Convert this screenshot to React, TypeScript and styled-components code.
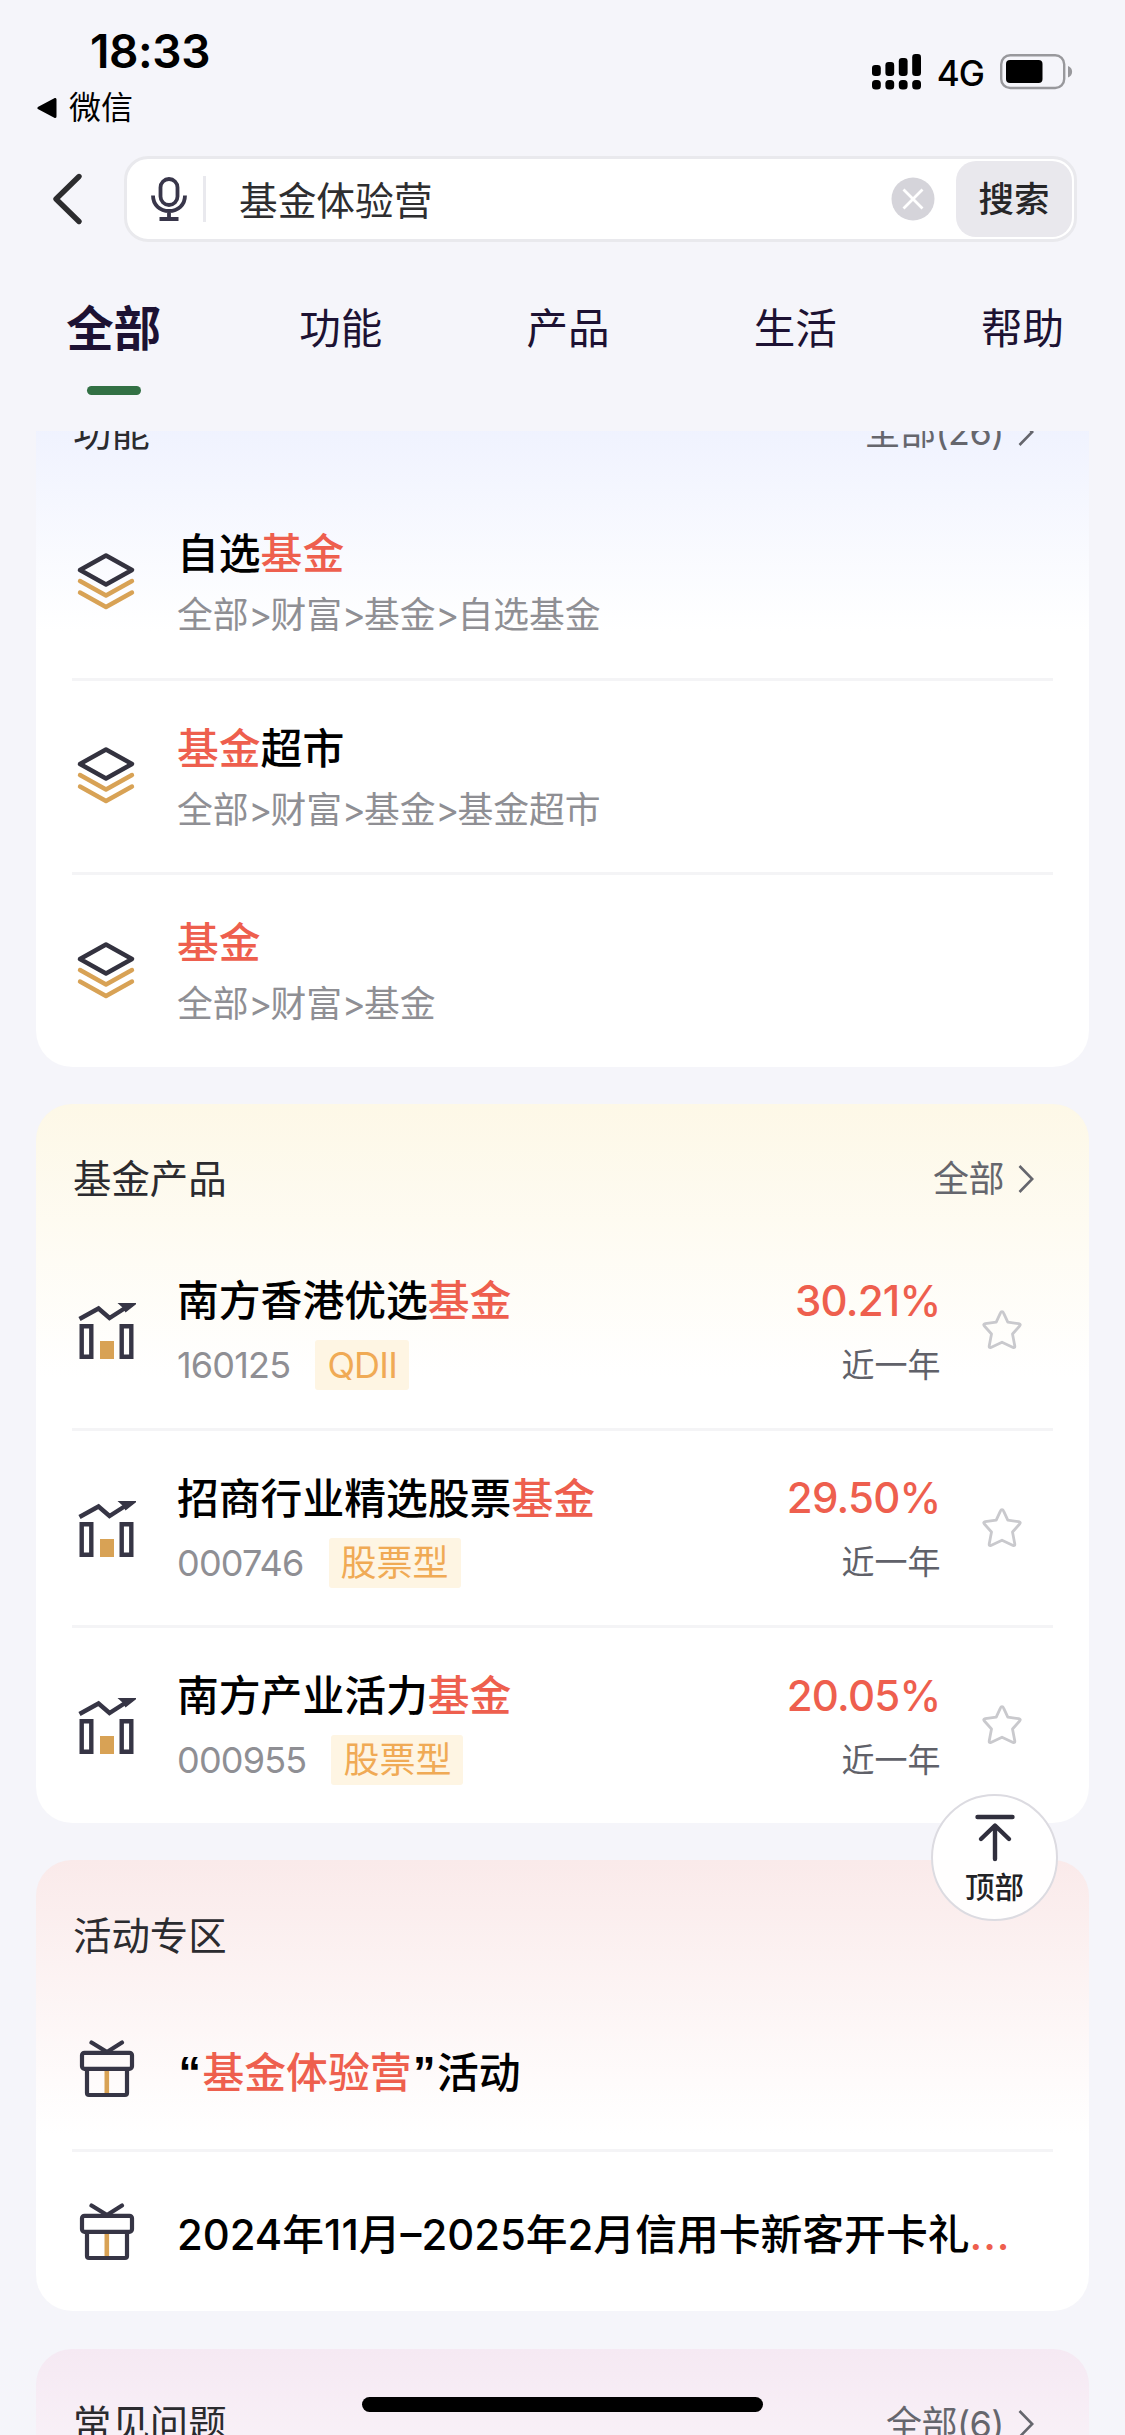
import React from "react";
import styled, { createGlobalStyle } from "styled-components";

const Global = createGlobalStyle`
  * { box-sizing: border-box; }
  html, body { margin: 0; padding: 0; background: #f5f5fa; }
  body { height: 2435px; overflow: hidden; font-family: Inter, "Noto Sans CJK SC", sans-serif; color: #000; }
  svg { display: block; flex: none; }
`;

const Screen = styled.div`
  position: relative;
  width: 1125px;
  height: 2435px;
  overflow: hidden;
  background: #f5f5fa;
  display: flex;
  flex-direction: column;
`;

const StatusBar = styled.header`
  height: 156px;
  flex: none;
  display: flex;
  justify-content: space-between;
  padding: 28px 52px 0 37px;
`;

const Clock = styled.div`
  font-size: 46px;
  font-weight: 600;
  line-height: 46px;
  letter-spacing: -0.4px;
  padding-left: 53px;
`;

const BackToApp = styled.div`
  display: flex;
  align-items: center;
  gap: 11px;
  margin-top: 17px;
  font-size: 32px;
  line-height: 34px;
`;

const Indicators = styled.div`
  display: flex;
  align-items: center;
  height: 36px;
  margin-top: 26px;
`;

const Network = styled.span`
  font-size: 35px;
  font-weight: 500;
  line-height: 36px;
  letter-spacing: -1px;
  margin: 2px 16px 0 16px;
`;

const SearchRow = styled.div`
  flex: none;
  display: flex;
  align-items: center;
  height: 86px;
  padding: 0 48px 0 52px;
`;

const SearchBox = styled.div`
  display: flex;
  align-items: center;
  flex: 1;
  height: 86px;
  margin-left: 41px;
  padding: 0 2px 0 24px;
  border: 3px solid #e9e9ed;
  border-radius: 24px;
  background: #fff;
`;

const Separator = styled.div`
  width: 3px;
  height: 46px;
  margin: 0 33px 0 16px;
  background: #e9e9ee;
`;

const Query = styled.div`
  flex: 1;
  padding-top: 3px;
  font-size: 38.7px;
  line-height: 46px;
  color: #2e2e30;
`;

const SearchButton = styled.button`
  width: 116px;
  height: 76px;
  margin-left: 21px;
  padding: 2px 0 0;
  border: 0;
  border-radius: 20px;
  background: #e9e8ed;
  color: #262628;
  font: 500 35.5px/74px Inter, "Noto Sans CJK SC", sans-serif;
`;

const Tabs = styled.nav`
  flex: none;
  display: flex;
  height: 189px;
  padding-top: 55px;
`;

const Tab = styled.div<{ $active?: boolean }>`
  flex: none;
  width: 227.25px;
  display: flex;
  flex-direction: column;
  align-items: center;
  font-size: ${(p) => (p.$active ? 47.5 : 41.5)}px;
  font-weight: ${(p) => (p.$active ? 700 : 400)};
  line-height: 64px;
  color: #1d1233;
  &::after {
    content: "";
    width: 54px;
    height: 9px;
    margin-top: 25px;
    border-radius: 5px;
    background: ${(p) => (p.$active ? "#327044" : "transparent")};
  }
`;

const Results = styled.main`
  flex: 1;
  min-height: 0;
  overflow: hidden;
  padding: 0 36px;
`;

const Feed = styled.div`
  display: flex;
  flex-direction: column;
  gap: 37.2px;
  margin-top: -74.5px;
`;

const Card = styled.section<{ $tint: string }>`
  padding: 0 36px;
  border-radius: 36px;
  background: linear-gradient(to bottom, ${(p) => p.$tint} 0, #fff 275px) #fff;
`;

const CardHead = styled.div`
  display: flex;
  justify-content: space-between;
  align-items: center;
  height: 126.5px;
  padding: 25px 19px 0 1px;
`;

const CardTitle = styled.h2`
  margin: 0;
  font-size: 38.4px;
  font-weight: 400;
  line-height: 52px;
  color: #2b2b2f;
`;

const More = styled.div`
  display: flex;
  align-items: center;
  gap: 14px;
  font-size: 36px;
  line-height: 52px;
  letter-spacing: -0.5px;
  color: #65666d;
`;

const Row = styled.div<{ $h: number }>`
  display: flex;
  align-items: center;
  height: ${(p) => p.$h}px;
  padding-left: 4px;
  border-top: 3px solid transparent;
  & + & { border-top-color: #f4f4f6; }
`;

const RowText = styled.div<{ $drop?: number }>`
  flex: 1;
  min-width: 0;
  margin-left: 41px;
  padding-top: ${(p) => p.$drop ?? 3}px;
`;

const RowTitle = styled.div`
  font-size: 41.8px;
  font-weight: 500;
  line-height: 56px;
  white-space: nowrap;
`;

const Mark = styled.span<{ $dots?: boolean }>`
  color: #ee5f4e;
  letter-spacing: ${(p) => (p.$dots ? "1px" : "inherit")};
`;

const Quote = styled.span`
  display: inline-block;
  width: 25.5px;
  text-align: center;
  font-family: "Liberation Sans", sans-serif;
  font-size: 45px;
  line-height: 50px;
  font-weight: 700;
`;

const Path = styled.div`
  margin-top: 6px;
  font-size: 35.8px;
  line-height: 54px;
  color: #8f8f94;
`;

const Arrow = styled.span`
  letter-spacing: -1.8px;
`;

const Meta = styled.div`
  display: flex;
  align-items: center;
  height: 50px;
  margin-top: 11px;
  font-size: 36px;
  color: #8f8f94;
`;

const Code = styled.span`
  letter-spacing: -0.8px;
`;

const Tag = styled.span<{ $tight: boolean }>`
  margin-left: 25px;
  padding: 0 12px;
  border-radius: 3px;
  background: #fef5e3;
  color: #f0aa55;
  line-height: 50px;
  letter-spacing: ${(p) => (p.$tight ? "-0.8px" : "0")};
`;

const Yield = styled.div`
  text-align: right;
  margin-right: 41px;
  padding-top: 2px;
`;

const Percent = styled.div`
  font-size: 42px;
  font-weight: 500;
  line-height: 56px;
  letter-spacing: -0.75px;
  color: #ee5f4e;
`;

const Period = styled.div`
  margin-top: 11px;
  font-size: 33px;
  line-height: 50px;
  color: #606169;
`;

const StarSlot = styled.div`
  margin-right: 31.5px;
`;

const TopButton = styled.button`
  position: absolute;
  left: 931px;
  top: 1794px;
  width: 127px;
  height: 127px;
  padding: 18px 0 0;
  border: 2px solid #dcdbe1;
  border-radius: 50%;
  background: rgba(255, 255, 255, 0.92);
  display: flex;
  flex-direction: column;
  align-items: center;
  gap: 5px;
  color: #222226;
  font: 500 29.5px/40px Inter, "Noto Sans CJK SC", sans-serif;
`;

const HomeBar = styled.div`
  position: absolute;
  left: 362px;
  top: 2397px;
  width: 401px;
  height: 15px;
  border-radius: 8px;
  background: #000;
`;

const Signal = () => (
  <svg width="49" height="36" viewBox="0 0 49 36">
    {[11, 14, 18, 22].map((h, i) => (
      <g key={h}>
        <rect x={i * 13.4} y={22 - h} width="8.8" height={h} rx="3.2" />
        <rect x={i * 13.4} y="26" width="8.8" height="9.6" rx="3.6" />
      </g>
    ))}
  </svg>
);

const Battery = () => (
  <svg width="73" height="36" viewBox="0 0 73 36">
    <rect x="1.2" y="1.2" width="63" height="32.8" rx="9" fill="none" stroke="#98989c" strokeWidth="2.4" />
    <rect x="6" y="6" width="36.5" height="23" rx="4" />
    <path d="M68 12c5.5 2 5.5 9.500 0 11.500z" fill="#98989c" />
  </svg>
);

const Chevron = () => (
  <svg width="16" height="28" viewBox="0 0 16 28" fill="none" stroke="#65666d" strokeWidth="2.6">
    <path d="M1.5 1 14.200 14 1.500 27" />
  </svg>
);

const Mic = () => (
  <svg width="36" height="44" viewBox="0 0 36 44" fill="none" stroke="#38364a" strokeWidth="3.8">
    <rect x="9.5" y="2" width="17" height="26" rx="8.5" />
    <path d="M2 18.500C2 28 9 34 18 34s16-6 16-15.500M18 34v8M8.500 42h19" />
  </svg>
);

const Layers = () => (
  <svg width="60" height="58" viewBox="0 0 60 58" fill="none" strokeWidth="4.4" strokeLinecap="round" strokeLinejoin="round">
    <path d="M30 2.500 56 17 30 31.500 4 17z" stroke="#33323f" />
    <path d="M4 28 30 42.500 56 28M4 39.500 30 54 56 39.500" stroke="#d8a255" />
  </svg>
);

const Growth = () => (
  <svg width="60" height="58" viewBox="0 0 60 58" fill="none" stroke="#363545" strokeWidth="4.4">
    <path d="M3.500 18 22.500 7.500 33.500 17 50 6.500" />
    <path d="M41.500 2H61.500L49.500 11.500 46.500 6.500z" fill="#363545" stroke="none" />
    <path d="M5.700 25.200h9.600v30.600H5.700zM45.700 25.200h9.600v30.600h-9.600z" />
    <path d="M24 40h14v18H24z" fill="#d8a255" stroke="none" />
  </svg>
);

const Gift = () => (
  <svg width="60" height="58" viewBox="0 0 60 58" fill="none" stroke="#363545" strokeWidth="4.2" strokeLinecap="round" strokeLinejoin="round">
    <path d="M30.800 31v23" stroke="#d8a255" strokeWidth="4.6" strokeLinecap="butt" />
    <rect x="6" y="12.8" width="50" height="16" rx="2.5" />
    <path d="M11 29v24q0 2 2 2h36q2 0 2-2V29M15.500 2.500 31 12 46 2.500" />
  </svg>
);

const Star = () => (
  <svg width="40" height="40" viewBox="0 0 40 40" fill="none" stroke="#c9c9cd" strokeWidth="2.8" strokeLinejoin="round">
    <path d="M20 1.600q1 0 1.500 1.200l4.300 9.400 11 1.500q2.400.500.800 2.300L30.500 24l2.300 12q.200 2.200-1.700 1.400L20 32.200 8.900 37.400q-1.900.800-1.700-1.400L9.500 24 2.400 16q-1.600-1.800.800-2.300l11-1.500 4.300-9.400q.500-1.200 1.500-1.200z" />
  </svg>
);

type Piece = string | { m: string } | { q: string };

const paint = (parts: Piece[]) =>
  parts.map((p, i) => {
    if (typeof p === "string") return <React.Fragment key={i}>{p}</React.Fragment>;
    if ("q" in p) return <Quote key={i}>{p.q}</Quote>;
    return (
      <Mark key={i} $dots={p.m === "..."}>
        {p.m}
      </Mark>
    );
  });

const features: { title: Piece[]; path: string[] }[] = [
  { title: ["自选", { m: "基金" }], path: ["全部", "财富", "基金", "自选基金"] },
  { title: [{ m: "基金" }, "超市"], path: ["全部", "财富", "基金", "基金超市"] },
  { title: [{ m: "基金" }], path: ["全部", "财富", "基金"] },
];

const funds = [
  { name: "南方香港优选", code: "160125", tag: "QDII", rate: "30.21%" },
  { name: "招商行业精选股票", code: "000746", tag: "股票型", rate: "29.50%" },
  { name: "南方产业活力", code: "000955", tag: "股票型", rate: "20.05%" },
];

const events: Piece[][] = [
  [{ q: "“" }, { m: "基金体验营" }, { q: "”" }, "活动"],
  ["2024年11月–2025年2月信用卡新客开卡礼", { m: "..." }],
];

const Head = ({ title, more }: { title: string; more?: string }) => (
  <CardHead>
    <CardTitle>{title}</CardTitle>
    {more && (
      <More>
        {more}
        <Chevron />
      </More>
    )}
  </CardHead>
);

export default function App() {
  return (
    <>
      <Global />
      <Screen>
        <StatusBar>
          <div>
            <Clock>18:33</Clock>
            <BackToApp>
              <svg width="21" height="20" viewBox="0 0 21 20">
                <path d="M18 1.500v17L2 10z" stroke="#000" strokeWidth="3" strokeLinejoin="round" />
              </svg>
              微信
            </BackToApp>
          </div>
          <Indicators>
            <Signal />
            <Network>4G</Network>
            <Battery />
          </Indicators>
        </StatusBar>

        <SearchRow>
          <svg width="31" height="54" viewBox="0 0 31 54" fill="none" stroke="#2c2c2e" strokeWidth="5.4" strokeLinecap="round" strokeLinejoin="round">
            <path d="M27 4.500 4 27 27 49.500" />
          </svg>
          <SearchBox>
            <Mic />
            <Separator />
            <Query>基金体验营</Query>
            <svg width="44" height="44" viewBox="0 0 44 44">
              <circle cx="22" cy="22" r="21.5" fill="#d5d4da" />
              <path d="M12.500 12.500l19 19M31.500 12.500l-19 19" stroke="#fff" strokeWidth="2.8" />
            </svg>
            <SearchButton>搜索</SearchButton>
          </SearchBox>
        </SearchRow>

        <Tabs>
          <Tab $active>全部</Tab>
          <Tab>功能</Tab>
          <Tab>产品</Tab>
          <Tab>生活</Tab>
          <Tab>帮助</Tab>
        </Tabs>

        <Results>
          <Feed>
            <Card $tint="#eaeefe">
              <Head title="功能" more="全部(26)" />
              {features.map((f) => (
                <Row key={f.path.join()} $h={194.5}>
                  <Layers />
                  <RowText $drop={5}>
                    <RowTitle>{paint(f.title)}</RowTitle>
                    <Path>
                      {f.path.map((step, i) => (
                        <React.Fragment key={i}>
                          {i > 0 && <Arrow>&gt;</Arrow>}
                          {step}
                        </React.Fragment>
                      ))}
                    </Path>
                  </RowText>
                </Row>
              ))}
            </Card>

            <Card $tint="#fdf8e7">
              <Head title="基金产品" more="全部" />
              {funds.map((f) => (
                <Row key={f.code} $h={197.5}>
                  <Growth />
                  <RowText>
                    <RowTitle>{paint([f.name, { m: "基金" }])}</RowTitle>
                    <Meta>
                      <Code>{f.code}</Code>
                      <Tag $tight={f.tag === "QDII"}>{f.tag}</Tag>
                    </Meta>
                  </RowText>
                  <Yield>
                    <Percent>{f.rate}</Percent>
                    <Period>近一年</Period>
                  </Yield>
                  <StarSlot>
                    <Star />
                  </StarSlot>
                </Row>
              ))}
            </Card>

            <Card $tint="#faeaea">
              <Head title="活动专区" />
              {events.map((e, i) => (
                <Row key={i} $h={162.5}>
                  <Gift />
                  <RowText $drop={7}>
                    <RowTitle>{paint(e)}</RowTitle>
                  </RowText>
                </Row>
              ))}
            </Card>

            <Card $tint="#f5e9f3">
              <Head title="常见问题" more="全部(6)" />
            </Card>
          </Feed>
        </Results>

        <TopButton>
          <svg width="40" height="48" viewBox="0 0 40 48" fill="none" stroke="#302f3d" strokeWidth="4.4" strokeLinecap="round" strokeLinejoin="round">
            <path d="M2.500 3h35M20 12v33M6 25 20 11.500 34 25" />
          </svg>
          顶部
        </TopButton>
        <HomeBar />
      </Screen>
    </>
  );
}
